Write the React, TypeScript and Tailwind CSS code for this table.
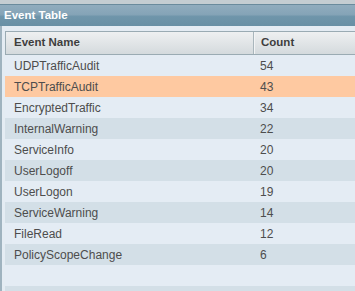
import React from "react";

const rows: [string, number][] = [
  ["UDPTrafficAudit", 54],
  ["TCPTrafficAudit", 43],
  ["EncryptedTraffic", 34],
  ["InternalWarning", 22],
  ["ServiceInfo", 20],
  ["UserLogoff", 20],
  ["UserLogon", 19],
  ["ServiceWarning", 14],
  ["FileRead", 12],
  ["PolicyScopeChange", 6],
  ["", 0],
  ["", 0],
];

export default function App() {
  return (
    <div
      className="w-[355px] h-[291px] overflow-hidden bg-[#e4ecf3] flex flex-col"
      style={{ fontFamily: '"Liberation Sans", Arial, sans-serif' }}
    >
      <div className="h-[5px] bg-[#c4cdd2] border-b border-[#6a8b9d] shrink-0" />
      <div className="h-[21px] shrink-0 bg-[linear-gradient(to_bottom,#90acbe_0%,#85a4b7_45%,#6f95aa_55%,#6890a5_100%)] flex items-center pl-[4px] text-white font-bold text-[11.5px]">
        Event Table
      </div>
      <div className="flex-1 border-l-2 border-[#9fb3bf] pl-[3px] pt-[5px] flex flex-col">
        <div className="h-[24px] shrink-0 flex border border-r-0 border-[#9aabb3] bg-[linear-gradient(to_bottom,#eef0f1,#d4dadd)] text-[11.5px] font-bold text-[#3e3e3e]">
          <div className="w-[248px] border-r border-[#a9b6bc] flex items-center pl-[8px]">Event Name</div>
          <div className="flex-1 border-l border-[#f2f4f5] flex items-center pl-[6px]">Count</div>
        </div>
        {rows.map(([name, count], i) => {
          const bg =
            i === 1 ? "bg-[#fec9a1]" : i % 2 === 1 ? "bg-[#d3dfe7]" : "bg-[#e4ecf4]";
          return (
            <div key={i} className={`h-[21px] shrink-0 flex items-center text-[12px] text-[#4d4d4d] ${bg}`}>
              <div className="w-[249px] pl-[9px]">{name}</div>
              <div className="flex-1 pl-[6px]">{name ? count : ""}</div>
            </div>
          );
        })}
      </div>
    </div>
  );
}
